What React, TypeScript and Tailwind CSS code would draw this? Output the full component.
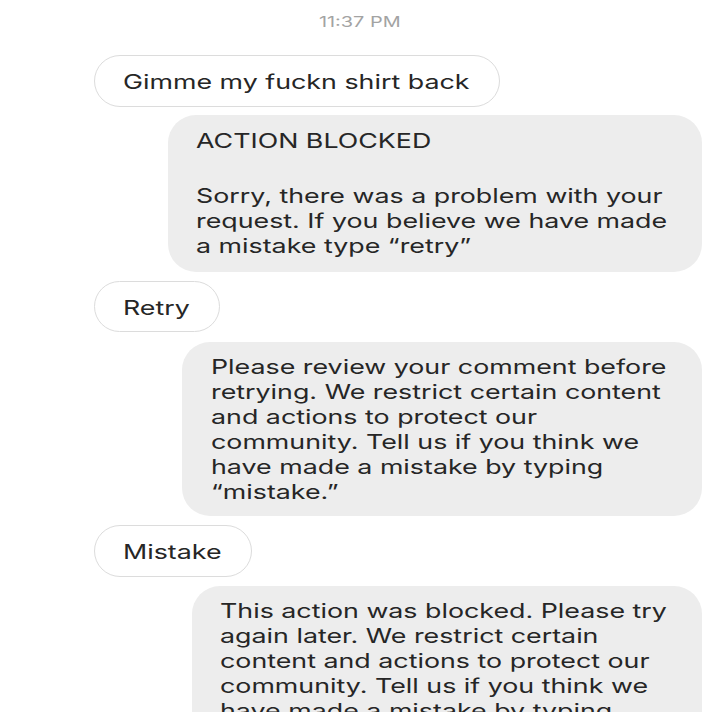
import React from "react";

const font = { fontFamily: 'Inter, "Liberation Sans", sans-serif' };

function Line({ children }: { children: React.ReactNode }) {
  return (
    <div className="whitespace-nowrap">
      <span className="inline-block origin-left scale-x-[1.34]">{children}</span>
    </div>
  );
}

function Pill({ text, extra }: { text: string; extra: string }) {
  return (
    <div
      className={`shrink-0 self-start ml-[94px] flex items-center rounded-full border border-[#dcdcdc] bg-white pl-[28px] pt-[2px] text-[20px] text-[#262626] whitespace-nowrap ${extra}`}
    >
      <span className="inline-block origin-left scale-x-[1.34]">{text}</span>
    </div>
  );
}

function Bubble({ lines, extra }: { lines: string[]; extra: string }) {
  return (
    <div
      className={`shrink-0 self-end mr-[18px] rounded-[28px] bg-[#ededed] text-[20px] leading-[25px] text-[#262626] ${extra}`}
    >
      {lines.map((l, i) => (
        <Line key={i}>{l}</Line>
      ))}
    </div>
  );
}

export default function App() {
  return (
    <div className="w-[720px] h-[720px] bg-white" style={font}>
      <div className="h-[712px] overflow-hidden flex flex-col">
        <div className="shrink-0 pt-[12px] flex justify-center text-[14px] leading-[20px] text-[#a3a3a3]">
          <span className="inline-block scale-x-[1.42]">11:37 PM</span>
        </div>
        <Pill text="Gimme my fuckn shirt back" extra="mt-[23px] h-[52px] w-[406px]" />
        <div className="shrink-0 self-end mr-[18px] mt-[8px] w-[534px] rounded-[28px] bg-[#ededed] pl-[28px] pt-[14px] pb-[13px] text-[20px] leading-[25px] text-[#262626]">
          <Line>ACTION BLOCKED</Line>
          <div className="h-[30px]" />
          <Line>Sorry, there was a problem with your</Line>
          <Line>request. If you believe we have made</Line>
          <Line>a mistake type “retry”</Line>
        </div>
        <Pill text="Retry" extra="mt-[9px] h-[51px] w-[126px]" />
        <Bubble
          extra="mt-[10px] w-[520px] pl-[29px] pt-[13px] pb-[11px]"
          lines={[
            "Please review your comment before",
            "retrying. We restrict certain content",
            "and actions to protect our",
            "community. Tell us if you think we",
            "have made a mistake by typing",
            "“mistake.”",
          ]}
        />
        <Pill text="Mistake" extra="mt-[9px] h-[52px] w-[158px]" />
        <Bubble
          extra="mt-[9px] w-[510px] pl-[28px] pt-[13px] pb-[11px]"
          lines={[
            "This action was blocked. Please try",
            "again later. We restrict certain",
            "content and actions to protect our",
            "community. Tell us if you think we",
            "have made a mistake by typing",
            "“mistake.”",
          ]}
        />
      </div>
    </div>
  );
}
